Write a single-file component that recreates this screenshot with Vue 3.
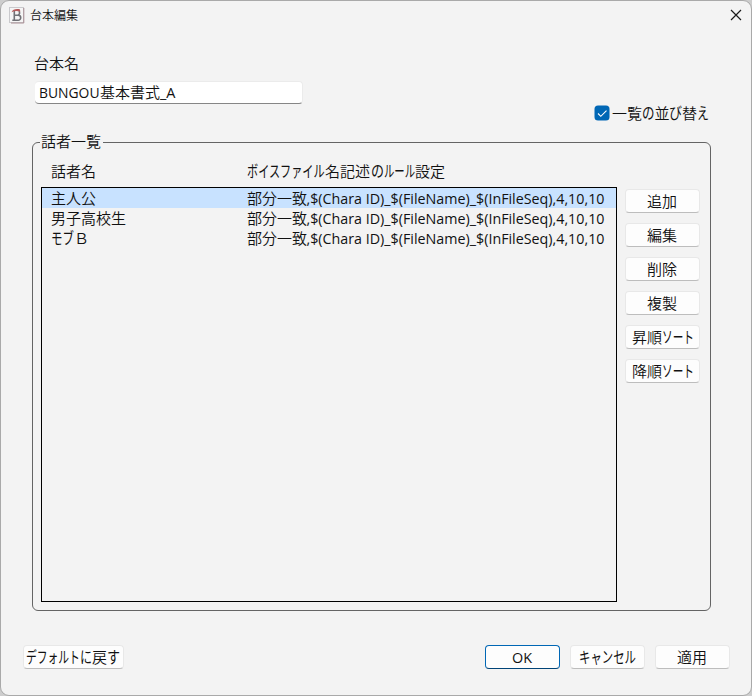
<script setup>
import { h, ref } from 'vue'

// A text label made of runs: [text, width, kind]. Kana and Latin runs are condensed to their width.
const KANA_SIZE = 16
const Label = (props) => {
  let x = 0
  const size = props.size || 15
  const y = size === 12 ? 14 : 15.5
  const nodes = props.runs.map(([text, width, kind]) => {
    let attrs = { x, y }
    if (kind === 'kana') {
      const scale = width / (text.length * KANA_SIZE)
      attrs = { y, transform: `translate(${x} 0) scale(${scale} 1)`, 'font-size': KANA_SIZE, 'font-weight': 400 }
    } else if (kind) {
      attrs.textLength = width - 0.5
      attrs.lengthAdjust = 'spacingAndGlyphs'
      attrs['font-weight'] = 400
    }
    x += width
    return h('text', attrs, text)
  })
  return h('svg', { width: x, height: 20, style: { fontSize: size + 'px' } }, nodes)
}
Label.props = ['runs', 'size']

const rule = [['部分一致', 59.5], [',$(Chara ID)_$(FileName)_$(InFileSeq),4,10,10', 298.5, 'latin']]
const rows = [
  [['主人公', 45]],
  [['男子高校生', 75]],
  [['モブ', 23, 'kana'], ['Ｂ', 15]],
]
const actions = [
  [['追加', 31]],
  [['編集', 31]],
  [['削除', 31]],
  [['複製', 31]],
  [['昇順', 30], ['ソート', 32, 'kana']],
  [['降順', 30], ['ソート', 32, 'kana']],
]
const selected = ref(0)
</script>

<template>
  <main class="desk">
    <div class="window">
      <header class="titlebar">
        <svg class="logo" width="16" height="17" viewBox="0 0 16 17">
          <rect x="0.5" y="0.5" width="14" height="15" fill="#f5f5f5" stroke="#c9c9cc" />
          <path d="M14.8 1v15H2" fill="none" stroke="#a98e94" />
          <path d="M5.3 4v9.5M3.3 13.2h5.9a2.5 2.5 0 0 0 0-5H5.5M8.8 8.2a2.3 2.3 0 0 0 1-4" fill="none" stroke="#707176" stroke-width="1.6" />
          <path d="M2.6 5.2C3.5 2.2 7 1.4 10.8 2.2l.6 2.4C8 3.8 5 3.9 2.6 5.2z" fill="#b65b5b" />
        </svg>
        <Label class="title" :runs="[['台本編集', 48]]" :size="12" />
        <svg class="close" width="12" height="12" viewBox="0 0 12 12">
          <path d="M1 1l10 10M11 1L1 11" stroke="#1a1a1a" stroke-width="1.2" />
        </svg>
      </header>

      <Label class="name-label" :runs="[['台本名', 45]]" />
      <div class="input">
        <Label :runs="[['BUNGOU', 61, 'latin'], ['基本書式', 60], ['_A', 16, 'latin']]" />
      </div>

      <div class="check-row">
        <svg width="16" height="16" viewBox="0 0 16 16">
          <rect x="0.5" y="0.5" width="15" height="15" rx="3.5" fill="#0067b5" />
          <path d="M4 8.5l2.8 2.8L12.5 5.6" fill="none" stroke="#fff" stroke-width="1.1" />
        </svg>
        <Label class="check-text" :runs="[['一覧', 30], ['の', 12.5, 'kana'], ['並', 14.5], ['び', 13, 'kana'], ['替', 15], ['え', 12, 'kana']]" />
      </div>

      <fieldset class="group">
        <legend><Label class="legend-text" :runs="[['話者一覧', 60]]" /></legend>
        <div class="columns">
          <Label class="col-name" :runs="[['話者名', 45]]" />
          <Label :runs="[['ボイスファイル', 78, 'kana'], ['名記述', 46], ['の', 13, 'kana'], ['ルール', 31, 'kana'], ['設定', 30]]" />
        </div>
        <div class="content">
          <div class="list">
            <div v-for="(row, i) in rows" :key="i" class="row" :class="{ selected: selected === i }" @click="selected = i">
              <span class="cell"><Label :runs="row" /></span>
              <Label :runs="rule" />
            </div>
          </div>
          <div class="actions">
            <button v-for="(a, i) in actions" :key="i"><Label :runs="a" /></button>
          </div>
        </div>
      </fieldset>

      <footer class="footer">
        <button class="reset"><Label :runs="[['デフォルト', 54, 'kana'], ['に', 12, 'kana'], ['戻', 15], ['す', 13, 'kana']]" /></button>
        <button class="primary"><Label :runs="[['OK', 20.5, 'latin']]" /></button>
        <button><Label :runs="[['キャンセル', 57, 'kana']]" /></button>
        <button><Label :runs="[['適用', 31]]" /></button>
      </footer>
    </div>
  </main>
</template>

<style>
body { overflow: hidden; }
</style>

<style scoped>
.desk {
  width: 752px;
  height: 696px;
  background: #cdcdcd;
  font-family: "Open Sans", "Noto Sans CJK JP", sans-serif;
  font-weight: 350;
  color: #000;
}
svg { display: block; flex: none; overflow: visible; fill: #111; }
.window {
  box-sizing: border-box;
  width: 752px;
  height: 696px;
  border: 1px solid #a9a9a9;
  border-radius: 9px;
  background: #f3f3f3;
  display: flex;
  flex-direction: column;
}
.titlebar {
  display: flex;
  align-items: center;
  height: 30px;
  padding: 0 9px 0 8px;
}
.logo { margin-top: -2px; }
.title { margin-left: 5px; }
.close { margin-left: auto; margin-top: -2px; }
.name-label { margin: 22px 0 0 32.5px; }
.input {
  box-sizing: border-box;
  width: 268px;
  height: 23px;
  margin: 8px 0 0 34px;
  padding: 0 0 0 4px;
  background: #fff;
  border: 1px solid #ebebeb;
  border-bottom-color: #868686;
  border-radius: 4px;
  border-left: 0;
}
.check-row {
  display: flex;
  align-items: center;
  height: 18px;
  margin: 0 0 0 593px;
}
.check-text { margin-left: 2px; }
.group {
  box-sizing: border-box;
  width: 679px;
  height: 479px;
  margin: 10px 0 0 31px;
  padding: 0 0 0 8px;
  border: 1px solid #646464;
  border-radius: 6px;
}
legend { padding: 0 2px 0 1px; margin-left: -1px; height: 20px; }
.legend-text { margin: -1px 0 0 0; }
.columns { display: flex; padding: 9px 0 0 10px; height: 26px; }
.col-name { margin-right: 151px; }
.content { display: flex; gap: 8px; }
.list {
  box-sizing: border-box;
  width: 576px;
  height: 415px;
  border: 1px solid #000;
}
.row { display: flex; height: 20px; padding-left: 9px; }
.row.selected { background: #c8e2ff; }
.cell { width: 196px; }
.actions { display: flex; flex-direction: column; gap: 10px; padding-top: 2px; }
button {
  box-sizing: border-box;
  display: flex;
  justify-content: center;
  align-items: center;
  width: 75px;
  height: 24px;
  padding: 0 0 1px 0;
  border: 1px solid #e8e8e8;
  border-bottom-color: #bdbdbd;
  border-radius: 4px;
  background: #fdfdfd;
  font: inherit;
  color: inherit;
}
.footer { display: flex; gap: 10px; padding: 34px 21px 0 22px; }
.footer button { padding-right: 1px; }
.footer .reset { width: 101px; margin-right: auto; }
.footer .primary { border-color: #0067b5; border-bottom-color: #004377; }
</style>
